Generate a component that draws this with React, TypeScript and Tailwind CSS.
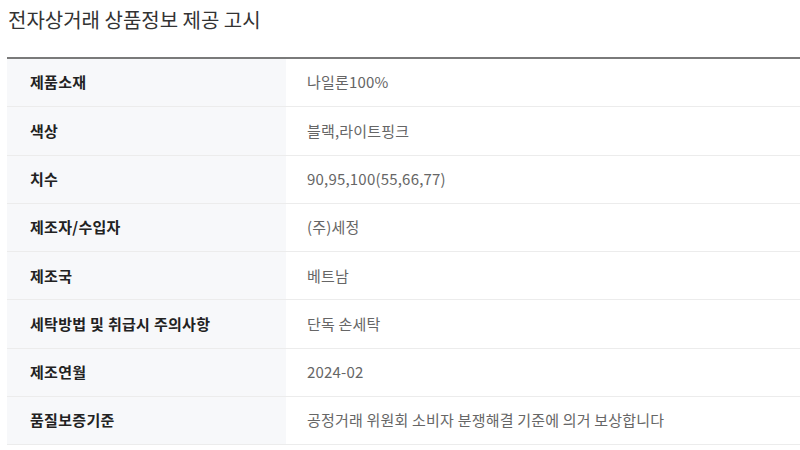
const rows: [string, string][] = [
  ['제품소재', '나일론100%'],
  ['색상', '블랙,라이트핑크'],
  ['치수', '90,95,100(55,66,77)'],
  ['제조자/수입자', '(주)세정'],
  ['제조국', '베트남'],
  ['세탁방법 및 취급시 주의사항', '단독 손세탁'],
  ['제조연월', '2024-02'],
  ['품질보증기준', '공정거래 위원회 소비자 분쟁해결 기준에 의거 보상합니다'],
]

export default function App() {
  return (
    <div
      className="h-[450px] w-[800px] overflow-hidden bg-white"
      style={{ fontFamily: '"Noto Sans CJK KR", "Noto Sans", sans-serif' }}
    >
      <h2 className="pl-[8px] pt-[5px] text-[20px] leading-[30px] font-normal text-[#333]">
        전자상거래 상품정보 제공 고시
      </h2>
      <div className="ml-[7px] mt-[22px] border-t-[2px] border-[#7a7a7a]">
        {rows.map(([label, value]) => (
          <div key={label} className="flex h-[48.3px] border-b border-[#ececec]">
            <div className="flex w-[279px] shrink-0 items-center bg-[#f7f8fa] pl-[23px] text-[15px] font-bold tracking-[0.3px] text-[#222]">
              {label}
            </div>
            <div className="flex flex-1 items-center pl-[21px] text-[15px] tracking-[0.2px] text-[#666]">{value}</div>
          </div>
        ))}
      </div>
    </div>
  )
}
